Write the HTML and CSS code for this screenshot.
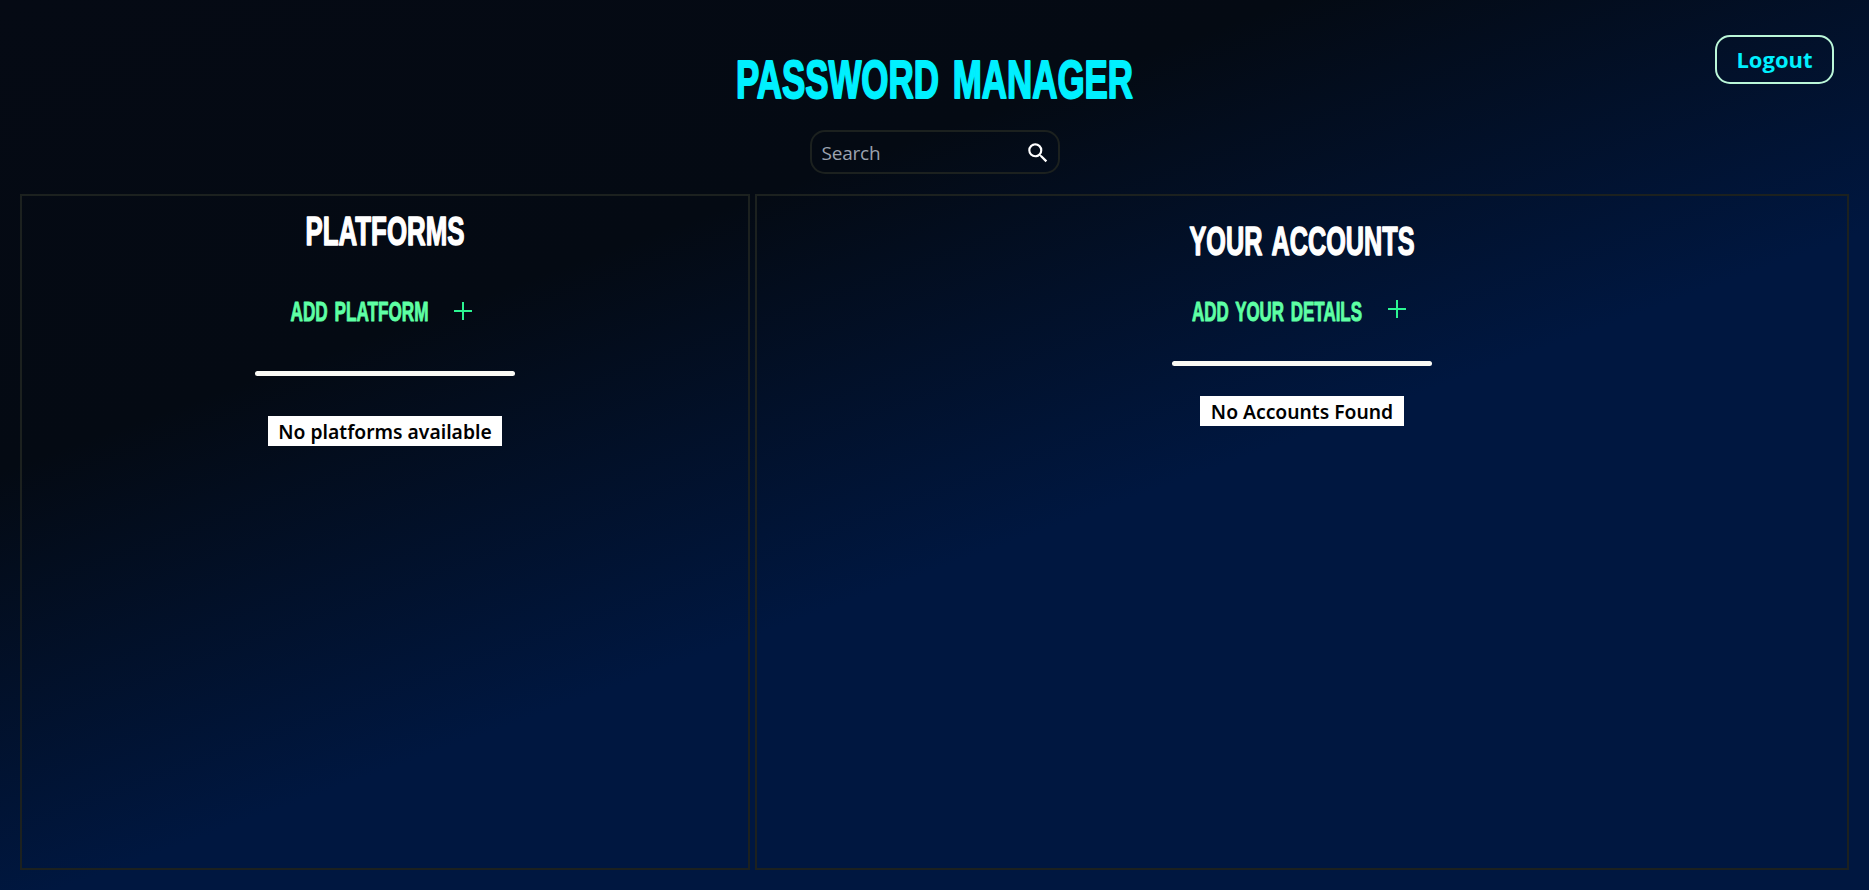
FILE: index.html
```
<!DOCTYPE html>
<html lang="en">
<head>
<meta charset="utf-8">
<title>Password Manager</title>
<link rel="stylesheet" href="styles.css">
</head>
<body>
<div class="page">
  <header class="header">
    <div></div>
    <div class="center">
      <svg class="display title" width="400" height="42">
        <text y="39" x="1" textLength="397" lengthAdjust="spacingAndGlyphs">PASSWORD MANAGER</text>
      </svg>
      <div class="search">
        <input class="search-input" type="text" placeholder="Search">
        <svg class="search-icon" width="26" height="26" viewBox="0 0 24 24"><path fill="currentColor" d="M15.5 14h-.79l-.28-.27A6.471 6.471 0 0 0 16 9.5 6.5 6.5 0 1 0 9.5 16c1.61 0 3.09-.59 4.23-1.57l.27.28v.79l5 4.99L20.49 19l-4.99-5zm-6 0C7.01 14 5 11.99 5 9.5S7.01 5 9.5 5 14 7.01 14 9.5 11.99 14 9.5 14z"/></svg>
      </div>
    </div>
    <button class="logout">Logout</button>
  </header>
  <main class="panels">
    <section class="panel platforms">
      <svg class="display heading" width="160" height="31">
        <text y="29" x="0.5" textLength="159" lengthAdjust="spacingAndGlyphs">PLATFORMS</text>
      </svg>
      <div class="add">
        <svg class="display label" width="139" height="22">
          <text y="20.5" x="0.5" textLength="138" lengthAdjust="spacingAndGlyphs">ADD PLATFORM</text>
        </svg>
        <svg class="plus" width="18" height="18"><path d="M9 0v18M0 9h18"/></svg>
      </div>
      <div class="rule"></div>
      <p class="empty">No platforms available</p>
    </section>
    <section class="panel accounts">
      <svg class="display heading" width="226" height="31">
        <text y="29" x="0.5" textLength="225" lengthAdjust="spacingAndGlyphs">YOUR ACCOUNTS</text>
      </svg>
      <div class="add">
        <svg class="display label" width="171" height="22">
          <text y="20.5" x="0" textLength="170" lengthAdjust="spacingAndGlyphs">ADD YOUR DETAILS</text>
        </svg>
        <svg class="plus" width="18" height="18"><path d="M9 0v18M0 9h18"/></svg>
      </div>
      <div class="rule"></div>
      <p class="empty wide">No Accounts Found</p>
    </section>
  </main>
</div>
</body>
</html>
```
FILE: styles.css
```
* { box-sizing: border-box; }
body { margin: 0; font-family: "Noto Sans", "Open Sans", sans-serif; }
.page {
  height: 890px;
  padding: 0 20px 20px;
  display: flex;
  flex-direction: column;
  overflow: hidden;
  background: linear-gradient(160deg, #050a14 0%, #040a13 30%, #001740 58%);
}
.header {
  height: 194px;
  flex: none;
  display: grid;
  grid-template-columns: 1fr 400px 1fr;
}
.center {
  padding-top: 59px;
  display: flex;
  flex-direction: column;
  align-items: center;
}
.display {
  flex: none;
  overflow: visible;
  font-family: "Liberation Sans Narrow", "Liberation Sans", sans-serif;
  font-weight: 700;
  word-spacing: .12em;
  fill: currentColor;
  stroke: currentColor;
  stroke-linejoin: round;
}
.title { color: #00f0ff; font-size: 54.5px; stroke-width: 2px; }
.heading { color: #fff; font-size: 40.5px; stroke-width: 1.5px; }
.label { font-size: 28px; stroke-width: 1px; }
.search {
  width: 250px;
  height: 44px;
  margin-top: 29px;
  padding: 0 7px 0 10px;
  border: 2px solid #1c211f;
  border-radius: 15px;
  display: flex;
  align-items: center;
}
.search-input {
  flex: 1;
  min-width: 0;
  padding: 2px 0 0;
  border: 0;
  outline: 0;
  background: transparent;
  color: #fff;
  font: 400 19px "Open Sans", sans-serif;
  letter-spacing: -.2px;
}
.search-input::placeholder { color: #9ca3af; opacity: 1; }
.search-icon { color: #fff; margin-top: 1px; }
.logout {
  justify-self: end;
  width: 119px;
  height: 49px;
  margin: 35px 15px 0 0;
  padding: 0 0 2px;
  border: 2px solid #bbf7d9;
  border-radius: 15px;
  background: transparent;
  color: #00f0ff;
  font: 700 22px "Open Sans", sans-serif;
}
.panels {
  flex: 1;
  display: grid;
  grid-template-columns: 730px 1fr;
  gap: 5px;
}
.panel {
  border: 2px solid #1c211f;
  display: flex;
  flex-direction: column;
  align-items: center;
}
.platforms { padding-top: 20px; }
.accounts { padding-top: 30px; }
.add {
  display: flex;
  align-items: center;
  gap: 25px;
  color: #5effa4;
}
.platforms .add { height: 22px; margin: 53px 0 49px; }
.accounts .add { height: 22px; margin: 43px 0 39px; }
.platforms .add { padding-right: 8px; }
.accounts .add { padding-right: 6px; }
.accounts .plus { margin-bottom: 4px; }
.plus { fill: none; stroke: #2cf592; stroke-width: 2; }
.rule {
  width: 260px;
  height: 5px;
  border-radius: 3px;
  background: #fafaf5;
}
.empty {
  width: 234px;
  height: 30px;
  margin: 40px 0 0;
  background: #fff;
  color: #000;
  font-size: 19.3px;
  font-weight: 600;
  line-height: 32px;
  text-align: center;
  white-space: nowrap;
}
.wide { width: 204px; margin-top: 30px; }
```
